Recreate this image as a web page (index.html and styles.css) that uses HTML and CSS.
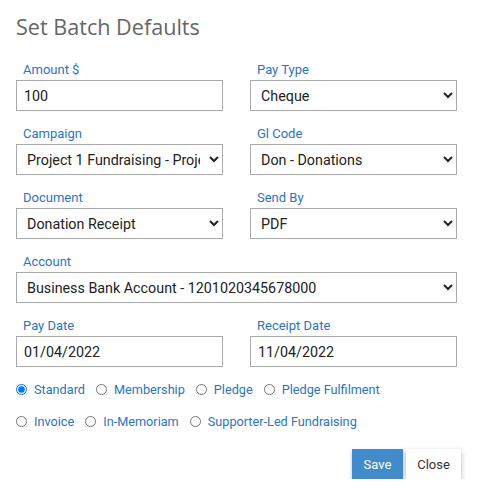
FILE: index.html
```html
<!DOCTYPE html>
<html>
<head>
<meta name="viewport" content="width=device-width, initial-scale=1">
<link rel="stylesheet" href="styles.css">
</head>
<body>

<form class="dialog" id="batchform">
  <h2 class="title">Set Batch Defaults</h2>

  <div class="grid">
    <div class="field">
      <label for="amount">Amount $</label>
      <input type="text" id="amount" value="100">
    </div>
    <div class="field">
      <label for="paytype">Pay Type</label>
      <select id="paytype"><option>Cheque</option></select>
    </div>

    <div class="field">
      <label for="campaign">Campaign</label>
      <select id="campaign"><option>Project 1 Fundraising - Project 1</option></select>
    </div>
    <div class="field">
      <label for="glcode">Gl Code</label>
      <select id="glcode"><option>Don - Donations</option></select>
    </div>

    <div class="field">
      <label for="document">Document</label>
      <select id="document"><option>Donation Receipt</option></select>
    </div>
    <div class="field">
      <label for="sendby">Send By</label>
      <select id="sendby"><option>PDF</option></select>
    </div>

    <div class="field wide">
      <label for="account">Account</label>
      <select id="account"><option>Business Bank Account - 1201020345678000</option></select>
    </div>

    <div class="field">
      <label for="paydate">Pay Date</label>
      <input type="text" id="paydate" value="01/04/2022">
    </div>
    <div class="field">
      <label for="receiptdate">Receipt Date</label>
      <input type="text" id="receiptdate" value="11/04/2022">
    </div>
  </div>

  <div class="radios first">
    <label class="radio"><input type="radio" name="kind" checked> Standard</label>
    <label class="radio"><input type="radio" name="kind"> Membership</label>
    <label class="radio"><input type="radio" name="kind"> Pledge</label>
    <label class="radio"><input type="radio" name="kind"> Pledge Fulfilment</label>
  </div>
  <div class="radios">
    <label class="radio"><input type="radio" name="kind"> Invoice</label>
    <label class="radio"><input type="radio" name="kind"> In-Memoriam</label>
    <label class="radio"><input type="radio" name="kind"> Supporter-Led Fundraising</label>
  </div>

  <div class="actions">
    <button type="submit" class="savebtn">Save</button>
    <button type="button" class="closebtn">Close</button>
  </div>
</form>

</body>
</html>
```

FILE: styles.css
```css
body {
    margin: 0;
    background: #fff;
    font-family: Roboto, "Liberation Sans", sans-serif;
}

.dialog {
    padding: 13px 20px 0 16px;
}

.title {
    margin: 0 0 21px 0;
    font-family: "Open Sans", "Liberation Sans", sans-serif;
    font-weight: normal;
    font-size: 21.6px;
    line-height: 28px;
    color: #666;
}

.grid {
    display: grid;
    grid-template-columns: 207px 207px;
    column-gap: 27px;
    row-gap: 15px;
}

.field.wide {
    grid-column: 1 / 3;
}

.field label {
    display: block;
    padding-left: 7px;
    font-size: 13px;
    line-height: 16px;
    margin-bottom: 2px;
    color: #2a74c6;
}

input[type=text], select {
    display: block;
    width: 100%;
    height: 31px;
    margin: 0;
    border: 1px solid #aaa;
    border-radius: 0;
    background: #fff;
    font-family: Roboto, "Liberation Sans", sans-serif;
    font-size: 14.3px;
    color: #222;
    box-sizing: border-box;
}

input[type=text] {
    padding: 0 7px;
}

select {
    padding: 0 6px;
}

.radios {
    display: flex;
    gap: 11px;
    height: 32px;
    align-items: center;
    font-size: 12.7px;
    color: #2a74c6;
}

.radios.first {
    margin-top: 6px;
}

.radio {
    display: flex;
    align-items: center;
}

.radio input {
    margin: 0 7px 0 0;
    width: 11px;
    height: 11px;
}

.actions {
    display: flex;
    justify-content: flex-end;
    gap: 3px;
    margin-top: 12px;
    margin-right: -4px;
}

.actions button {
    height: 30px;
    border: none;
    font-family: Roboto, "Liberation Sans", sans-serif;
    font-size: 13px;
    cursor: pointer;
}

.savebtn {
    width: 51px;
    background-color: #428bca;
    color: #fff;
    box-shadow: 0 2px 4px rgba(0,0,0,0.25);
}

.closebtn {
    width: 55px;
    background-color: #fff;
    color: #333;
    box-shadow: 0 2px 5px rgba(0,0,0,0.3);
}
```
